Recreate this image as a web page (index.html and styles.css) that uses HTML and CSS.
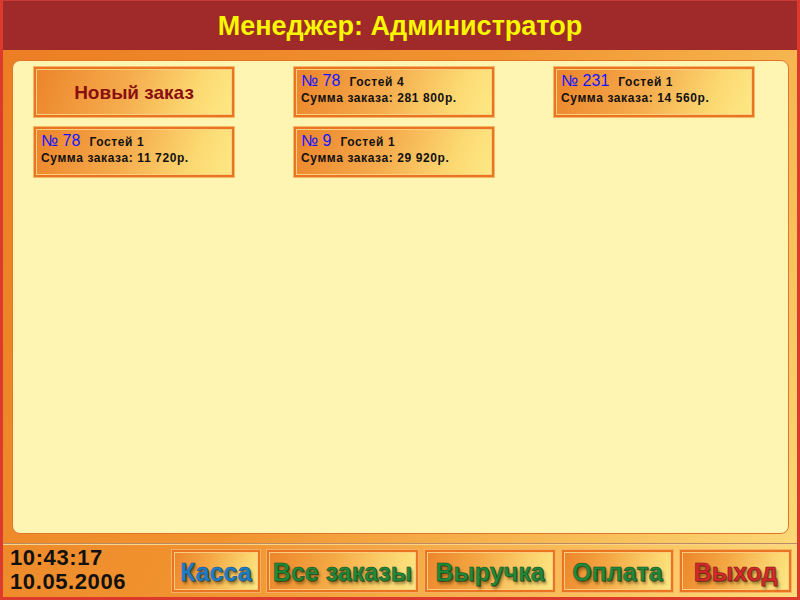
FILE: index.html
```html
<!DOCTYPE html>
<html lang="ru">
<head>
<meta charset="utf-8">
<title>Менеджер</title>
<link rel="stylesheet" href="styles.css">
</head>
<body>
<div class="app">
  <header class="header">Менеджер: Администратор</header>
  <div class="frame">
    <main class="panel">
      <div class="grid">
        <button class="tile new-order">Новый заказ</button>
        <div class="tile order">
          <div class="line1"><span class="num">№ 78</span><span class="guests">Гостей 4</span></div>
          <div class="sum">Сумма заказа: 281 800р.</div>
        </div>
        <div class="tile order">
          <div class="line1"><span class="num">№ 231</span><span class="guests">Гостей 1</span></div>
          <div class="sum">Сумма заказа: 14 560р.</div>
        </div>
        <div class="tile order">
          <div class="line1"><span class="num">№ 78</span><span class="guests">Гостей 1</span></div>
          <div class="sum">Сумма заказа: 11 720р.</div>
        </div>
        <div class="tile order">
          <div class="line1"><span class="num">№ 9</span><span class="guests">Гостей 1</span></div>
          <div class="sum">Сумма заказа: 29 920р.</div>
        </div>
      </div>
    </main>
    <footer class="footer">
      <div class="clock">
        <div>10:43:17</div>
        <div>10.05.2006</div>
      </div>
      <nav class="actions">
        <button class="btn blue w-kassa">Касса</button>
        <button class="btn green w-all">Все заказы</button>
        <button class="btn green w-rev">Выручка</button>
        <button class="btn green w-pay">Оплата</button>
        <button class="btn red w-exit">Выход</button>
      </nav>
    </footer>
  </div>
</div>
</body>
</html>
```

FILE: styles.css
```css
* { box-sizing: border-box; }
html, body { margin: 0; padding: 0; }
body {
  width: 800px;
  height: 600px;
  overflow: hidden;
  font-family: "Liberation Sans", Arial, sans-serif;
}
.app {
  width: 800px;
  height: 600px;
  border: 3px solid #dd3a2e;
  border-top: 1px solid #c83a32;
  display: flex;
  flex-direction: column;
  background: #a0292a;
}
.header {
  height: 49px;
  flex: none;
  background: #a0292a;
  color: #f7f700;
  font-weight: bold;
  font-size: 27px;
  text-align: center;
  line-height: 50px;
}
.frame {
  flex: 1;
  display: flex;
  flex-direction: column;
  background: linear-gradient(120deg, #ec7e24 0%, #f0932f 45%, #f8c05a 80%, #fcdc7c 100%);
  padding: 10px 8px 0 9px;
}
.panel {
  height: 474px;
  flex: none;
  background: #fff5b2;
  border: 1px solid #e4742a;
  border-radius: 8px;
  padding: 6px 0 0 21px;
}
.grid {
  display: grid;
  grid-template-columns: repeat(3, 200px);
  grid-auto-rows: 50px;
  column-gap: 60px;
  row-gap: 10px;
}
.tile {
  border: 2px solid #e9761f;
  box-shadow: 0 0 0 1px #f7b56a, inset 0 0 0 1px #fbcf82;
  background: linear-gradient(110deg, #ec842a 0%, #f5ab4c 45%, #fcd972 80%, #fde985 100%);
  margin: 0;
}
.new-order {
  font-family: "Liberation Sans", Arial, sans-serif;
  font-weight: bold;
  font-size: 19px;
  color: #8a0f10;
  padding: 1px 0 0;
}
.order {
  padding: 3px 0 0 5px;
}
.line1 {
  height: 19px;
  display: flex;
  align-items: baseline;
}
.num {
  color: #1414ff;
  font-size: 16px;
  margin-right: 9px;
}
.guests, .sum {
  font-size: 12px;
  font-weight: bold;
  letter-spacing: 0.6px;
  color: #111;
}
.sum { line-height: 14px; }
.footer {
  flex: 1;
  margin: 9px -8px 0 -9px;
  border-top: 1px solid #b98a66;
  box-shadow: inset 0 1px 0 #fbd48a;
  display: flex;
  align-items: flex-start;
  padding: 6px 6px 0 7px;
}
.clock {
  font-weight: bold;
  font-size: 22px;
  letter-spacing: 0.6px;
  line-height: 24px;
  color: #111;
  margin-top: -4px;
}
.actions {
  margin-left: auto;
  display: flex;
  gap: 7px;
}
.btn {
  height: 42px;
  border: 2px solid #ea7420;
  box-shadow: 0 0 0 1px #f6b066, inset 0 0 0 1px #fbcd80;
  background: linear-gradient(110deg, #ec842a 0%, #f4a844 40%, #fbd670 80%, #fde985 100%);
  font-family: "Liberation Sans", Arial, sans-serif;
  font-weight: bold;
  font-size: 25px;
  padding: 2px 0 0;
  margin: 0;
  text-shadow: 1px 1px 0 rgba(30, 20, 0, .45), 2px 3px 3px rgba(70, 50, 0, .55);
}
.blue { color: #1d7fc9; -webkit-text-stroke: .5px #10508a; }
.green { color: #1f8a3a; -webkit-text-stroke: .5px #0e4a1c; }
.red { color: #d42a2c; -webkit-text-stroke: .5px #7a1010; }
.w-kassa { width: 88px; }
.w-all { width: 151px; }
.w-rev { width: 130px; }
.w-pay { width: 111px; }
.w-exit { width: 111px; }
```
